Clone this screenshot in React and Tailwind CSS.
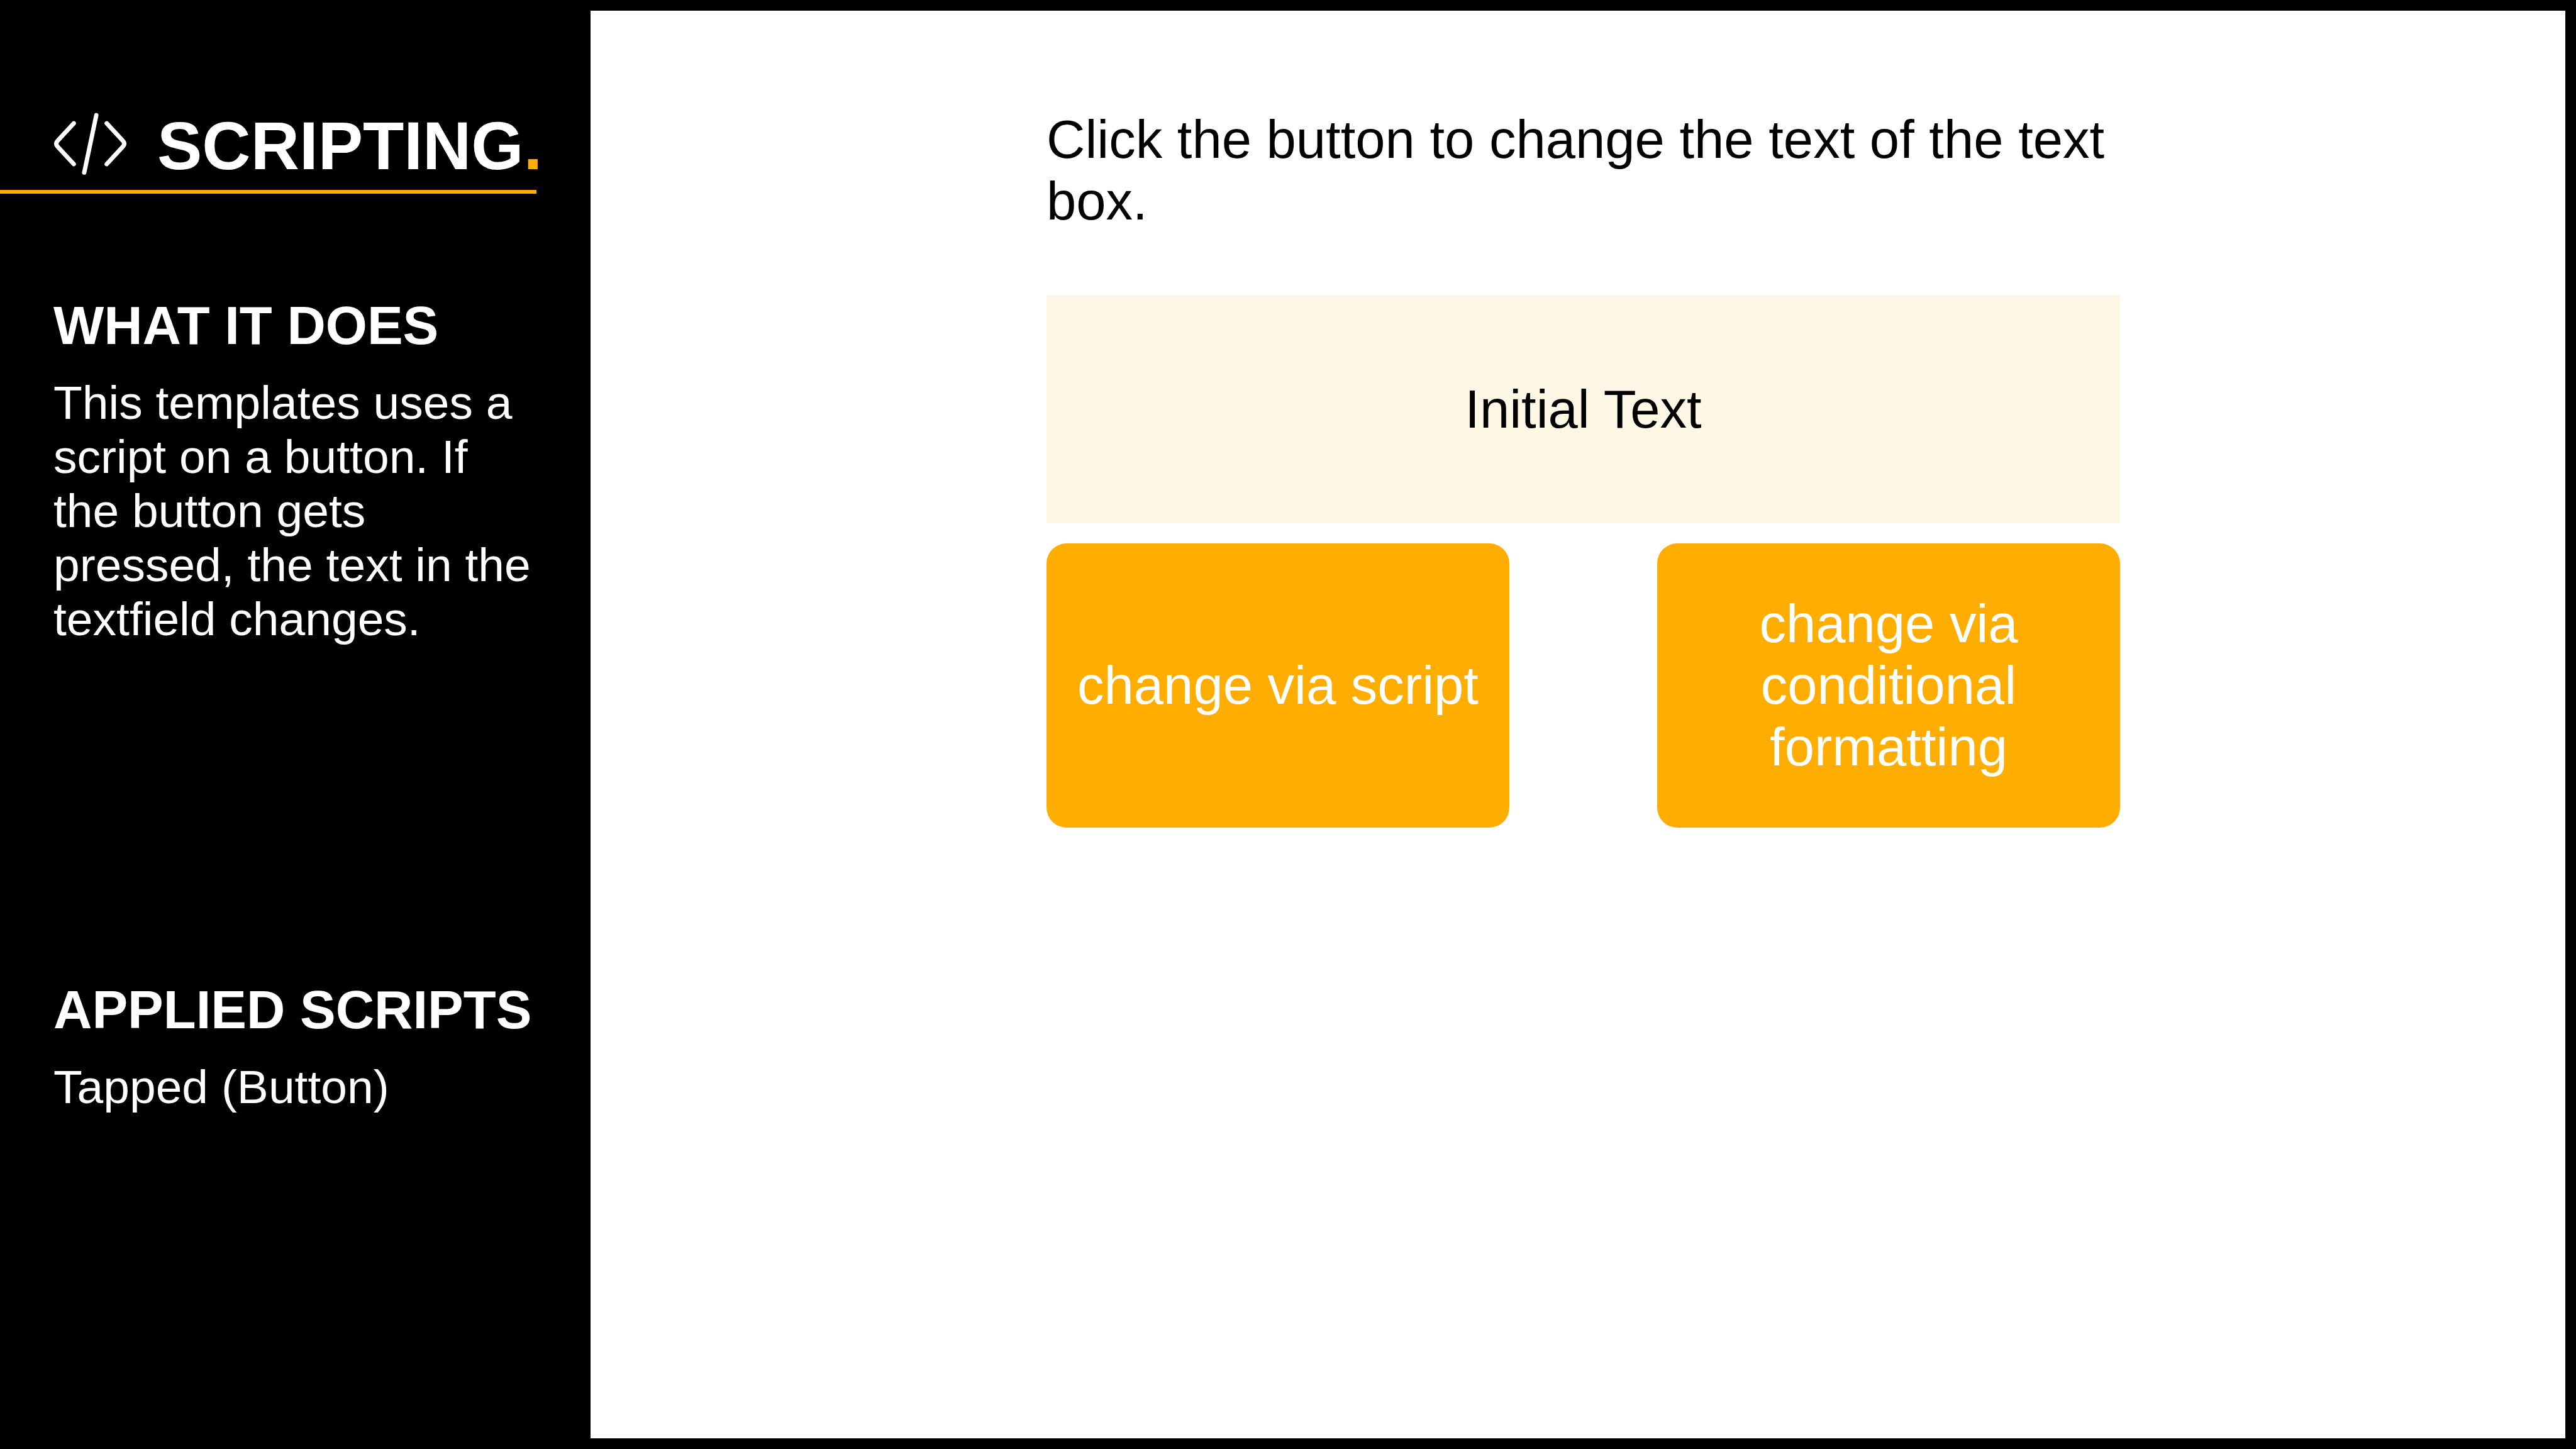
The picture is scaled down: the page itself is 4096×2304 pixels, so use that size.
import { useState } from "react";

function CodeIcon() {
  return (
    <svg
      viewBox="107 223 146 134"
      className="h-[107px] w-[117px] shrink-0"
      fill="none"
      stroke="currentColor"
      strokeWidth="8.6"
      strokeLinecap="round"
      strokeLinejoin="round"
      aria-hidden="true"
    >
      <path d="M147.2 244.4 L115 279.2 Q109.6 285 115 290.8 L147.2 325.6" />
      <path d="M192.1 228 L168 342.6" />
      <path d="M212.8 244.4 L245 279.2 Q250.4 285 245 290.8 L212.8 325.6" />
    </svg>
  );
}

function Section({ title, children }) {
  return (
    <section className="flex flex-col gap-[27px] pl-[85px]">
      <h2 className="text-[85px] leading-[104px] font-bold whitespace-nowrap">{title}</h2>
      <p className="text-[75px] leading-[86px]">{children}</p>
    </section>
  );
}

function ActionButton({ onClick, children }) {
  return (
    <button
      type="button"
      onClick={onClick}
      className="flex h-[452px] items-center justify-center rounded-[32px] bg-[#ffad00] px-8 text-center text-[85px] leading-[98px] text-white"
    >
      {children}
    </button>
  );
}

export default function App() {
  const [text, setText] = useState("Initial Text");

  return (
    <div className="flex min-h-screen w-full bg-black py-[17px] pr-[17px] font-['Liberation_Sans',Arial,sans-serif]">
      <aside className="w-[939px] shrink-0 pr-[86px] text-white">
        <header className="flex items-center gap-[48px] border-b-[6px] border-[#ffad00] pt-[151px] pb-[6px] pl-[85px]">
          <CodeIcon />
          <h1 className="text-[107px] leading-[128px] font-bold whitespace-nowrap">
            SCRIPTING<span className="text-[#ffad00]">.</span>
          </h1>
        </header>
        <div className="flex flex-col gap-[527px] pt-[158px]">
          <Section title="WHAT IT DOES">
            This templates uses a script on a button. If the button gets pressed, the text in the
            textfield changes.
          </Section>
          <Section title="APPLIED SCRIPTS">Tapped (Button)</Section>
        </div>
      </aside>

      <main className="grid flex-1 grid-cols-[725fr_1707fr_708fr] bg-white text-[85px] leading-[98px] text-black">
        <div className="col-start-2 flex flex-col pt-[156px]">
          <label htmlFor="result">Click the button to change the text of the text box.</label>
          <input
            id="result"
            readOnly
            value={text}
            className="mt-[100px] h-[363px] w-full bg-[#fff7e6] text-center"
          />
          <div className="mt-8 grid grid-cols-2 gap-[235px]">
            <ActionButton onClick={() => setText("Changed via script")}>
              change via script
            </ActionButton>
            <ActionButton onClick={() => setText("Changed via formatting")}>
              change via conditional formatting
            </ActionButton>
          </div>
        </div>
      </main>
    </div>
  );
}
